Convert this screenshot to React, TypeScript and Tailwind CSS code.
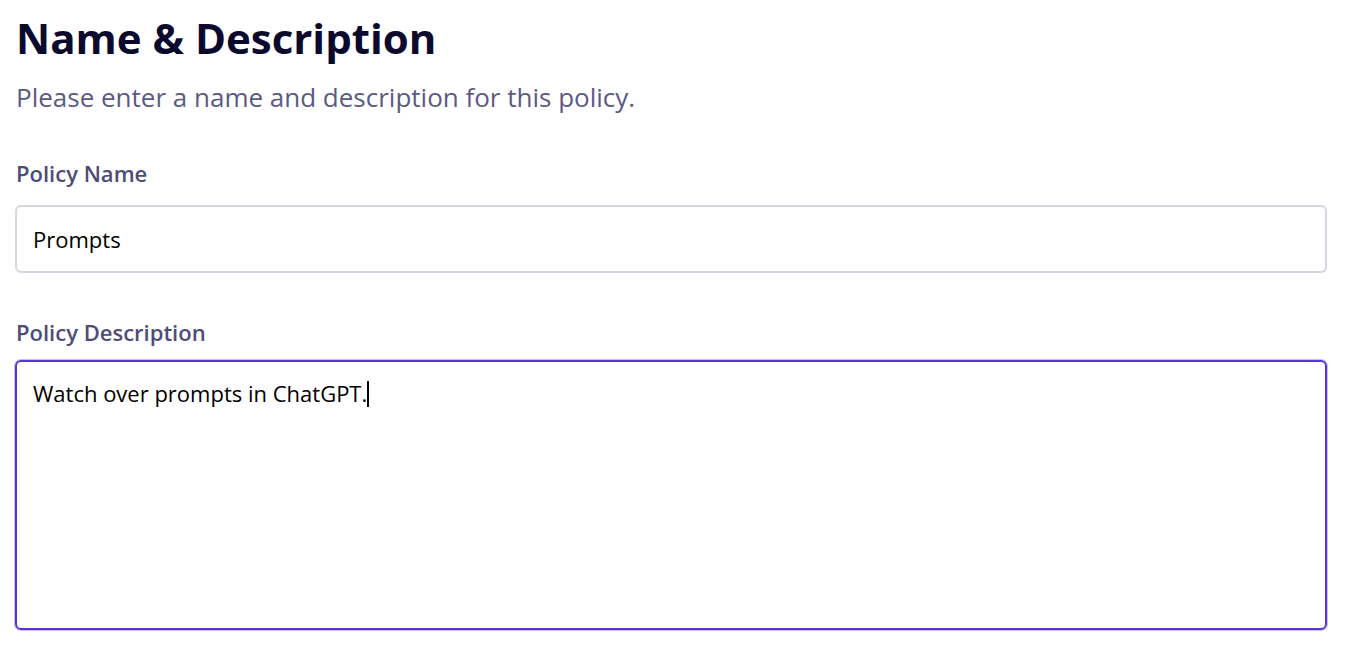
import React from "react";

export default function App() {
  return (
    <div className="min-h-screen bg-white px-[15px] pt-[10px]" style={{ fontFamily: "'Open Sans', Lato, sans-serif" }}>
      <h1 className="text-[42px] font-bold leading-[56px] text-[#0b0a2c] pl-[1px]">Name &amp; Description</h1>
      <p className="mt-[14px] text-[26px] leading-[34px] text-[#5c5a85] pl-[1px]">Please enter a name and description for this policy.</p>

      <label className="mt-[45px] block text-[22px] font-semibold leading-[28px] text-[#4e4c78] pl-[1px]">Policy Name</label>
      <div className="mt-[18px] flex h-[68px] w-[1312px] items-center rounded-[6px] border-2 border-[#d6d4e5] px-[16px] text-[22px] text-black">
        Prompts
      </div>

      <label className="mt-[45px] block text-[22px] font-semibold leading-[28px] text-[#4e4c78] pl-[1px]">Policy Description</label>
      <div className="mt-[14px] h-[270px] w-[1312px] rounded-[6px] border-2 border-[#5a33d6] px-[16px] pt-[14px] text-[22px] leading-[30px] text-black shadow-[0_0_0_1px_#cbbcf5]">
        Watch over prompts in ChatGPT.<span className="inline-block h-[26px] w-[2px] translate-y-[5px] bg-black align-baseline" />
      </div>
    </div>
  );
}
